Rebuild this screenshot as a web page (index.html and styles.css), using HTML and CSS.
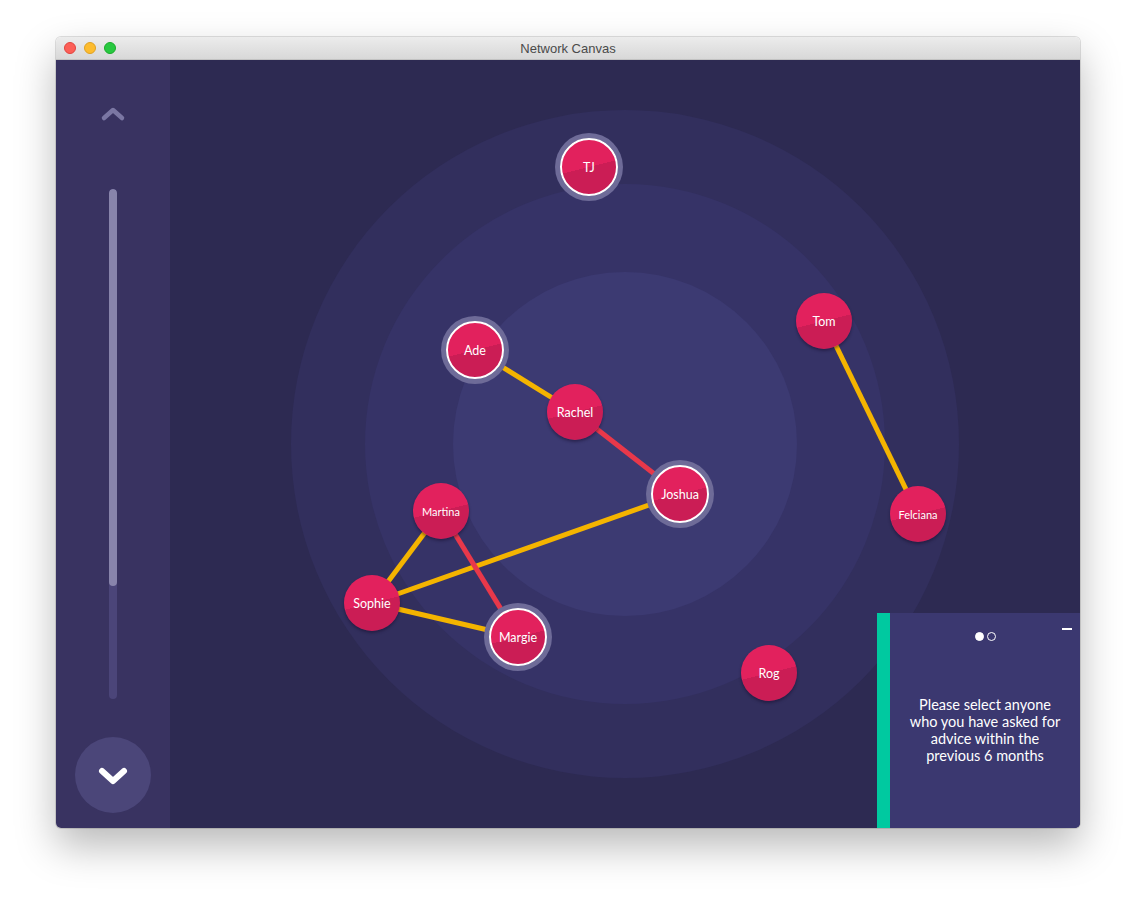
FILE: index.html
```html
<!DOCTYPE html>
<html>
<head>
<meta charset="utf-8">
<title>Network Canvas</title>
<link rel="stylesheet" href="styles.css">
</head>
<body>
<div class="window">
  <div class="titlebar">
    <div class="lights">
      <span class="light red"></span>
      <span class="light yellow"></span>
      <span class="light green"></span>
    </div>
    <div class="title">Network Canvas</div>
  </div>
  <div class="content">
    <aside class="sidebar">
      <button class="up-btn" aria-label="Previous">
        <svg width="26" height="16" viewBox="0 0 26 16"><path d="M4 12 L13 4 L22 12" fill="none" stroke="#7b77a3" stroke-width="4.5" stroke-linecap="round" stroke-linejoin="round"/></svg>
      </button>
      <div class="progress"><div class="progress-fill"></div></div>
      <button class="down-btn" aria-label="Next">
        <svg width="32" height="22" viewBox="0 0 32 22"><path d="M5 6 L16 16 L27 6" fill="none" stroke="#ffffff" stroke-width="6" stroke-linecap="round" stroke-linejoin="round"/></svg>
      </button>
    </aside>
    <main class="canvas">
      <div class="ring ring-outer"></div>
      <div class="ring ring-middle"></div>
      <div class="ring ring-inner"></div>
      <svg class="edges" width="910" height="768" viewBox="0 0 910 768">
        <g stroke-width="5" stroke-linecap="butt">
          <line x1="305" y1="290" x2="405" y2="352" stroke="#f4b400"/>
          <line x1="405" y1="352" x2="510" y2="434" stroke="#e8384a"/>
          <line x1="510" y1="434" x2="202" y2="543" stroke="#f4b400"/>
          <line x1="271" y1="451" x2="202" y2="543" stroke="#f4b400"/>
          <line x1="271" y1="451" x2="348" y2="577" stroke="#e8384a"/>
          <line x1="202" y1="543" x2="348" y2="577" stroke="#f4b400"/>
          <line x1="654" y1="261" x2="748" y2="454" stroke="#f4b400"/>
        </g>
      </svg>
      <div class="node selected" style="left:419px;top:107px"><span>TJ</span></div>
      <div class="node selected" style="left:305px;top:290px"><span>Ade</span></div>
      <div class="node" style="left:405px;top:352px"><span>Rachel</span></div>
      <div class="node selected" style="left:510px;top:434px"><span>Joshua</span></div>
      <div class="node" style="left:654px;top:261px"><span>Tom</span></div>
      <div class="node small-label" style="left:748px;top:454px"><span>Felciana</span></div>
      <div class="node small-label" style="left:271px;top:451px"><span>Martina</span></div>
      <div class="node" style="left:202px;top:543px"><span>Sophie</span></div>
      <div class="node selected" style="left:348px;top:577px"><span>Margie</span></div>
      <div class="node" style="left:599px;top:613px"><span>Rog</span></div>

      <section class="prompt">
        <div class="prompt-bar"></div>
        <div class="prompt-body">
          <div class="prompt-top">
            <div class="pager">
              <span class="dot filled"></span>
              <span class="dot"></span>
            </div>
            <span class="minimize"></span>
          </div>
          <p class="prompt-text">Please select anyone who you have asked for advice within the previous 6 months</p>
        </div>
      </section>
    </main>
  </div>
</div>
</body>
</html>
```

FILE: styles.css
```css
* { box-sizing: border-box; }
html, body { margin: 0; padding: 0; background: #ffffff; }
body {
  width: 1136px;
  height: 902px;
  padding: 37px 0 0 56px;
  font-family: "Lato", "Noto Sans", sans-serif;
}
.window {
  width: 1024px;
  height: 791px;
  border-radius: 5px;
  overflow: hidden;
  display: flex;
  flex-direction: column;
  box-shadow: 0 18px 40px rgba(0,0,0,0.28), 0 0 0 1px rgba(0,0,0,0.12);
}
.titlebar {
  height: 23px;
  flex: 0 0 23px;
  background: linear-gradient(#ececec, #d8d8d8);
  border-bottom: 1px solid #c2c2c2;
  position: relative;
  display: flex;
  align-items: center;
}
.lights {
  display: flex;
  gap: 8px;
  padding-left: 8px;
  position: relative;
  z-index: 1;
}
.light {
  width: 12px;
  height: 12px;
  border-radius: 50%;
  display: block;
}
.light.red { background: #fc5f57; border: 1px solid #e0443e; }
.light.yellow { background: #fdbc2e; border: 1px solid #dea123; }
.light.green { background: #28c840; border: 1px solid #1aab29; }
.title {
  position: absolute;
  left: 0; right: 0; top: 0; bottom: 0;
  display: flex;
  align-items: center;
  justify-content: center;
  font-family: "Liberation Sans", sans-serif;
  font-size: 13px;
  color: #4a4a4a;
}
.content {
  flex: 1;
  display: flex;
  min-height: 0;
}
.sidebar {
  width: 114px;
  flex: 0 0 114px;
  background: #393361;
  display: flex;
  flex-direction: column;
  align-items: center;
  padding-top: 46px;
}
.up-btn {
  border: 0;
  background: none;
  padding: 0;
  width: 26px;
  height: 16px;
  display: block;
}
.progress {
  margin-top: 67px;
  width: 8px;
  height: 510px;
  border-radius: 4px;
  background: #4b4579;
  position: relative;
  overflow: hidden;
}
.progress-fill {
  width: 8px;
  height: 397px;
  border-radius: 4px;
  background: #8884ab;
}
.down-btn {
  margin-top: 38px;
  width: 76px;
  height: 76px;
  border-radius: 50%;
  border: 0;
  background: #4b4679;
  display: flex;
  align-items: center;
  justify-content: center;
  padding: 0;
}
.down-btn svg { margin-top: 1px; }
.canvas {
  flex: 1;
  position: relative;
  background: #2d2a52;
  overflow: hidden;
}
.ring {
  position: absolute;
  border-radius: 50%;
  transform: translate(-50%, -50%);
  left: 455px;
  top: 384px;
}
.ring-outer { width: 668px; height: 668px; background: #322f5d; }
.ring-middle { width: 520px; height: 520px; background: #363367; }
.ring-inner { width: 344px; height: 344px; background: #3c3a72; }
.edges {
  position: absolute;
  left: 0;
  top: 0;
}
.node {
  position: absolute;
  width: 56px;
  height: 56px;
  margin: -28px 0 0 -28px;
  border-radius: 50%;
  background: linear-gradient(166deg, #e2215d 0%, #e2215d 50%, #cb1d55 50%, #cb1d55 100%);
  box-shadow: 0 2px 3px rgba(20, 10, 40, 0.45);
  display: flex;
  align-items: center;
  justify-content: center;
  color: #ffffff;
  font-size: 12.5px;
  font-weight: 400;
}
.node.small-label { font-size: 11px; }
.node.selected {
  border: 2px solid #ffffff;
  box-shadow: 0 0 0 5px #6e6b98;
  width: 58px;
  height: 58px;
  margin: -29px 0 0 -29px;
}
.prompt {
  position: absolute;
  right: 0;
  bottom: 0;
  width: 203px;
  height: 215px;
  display: flex;
  background: #3b3870;
}
.prompt-bar {
  width: 13px;
  flex: 0 0 13px;
  background: #00c9a0;
}
.prompt-body {
  flex: 1;
  display: flex;
  flex-direction: column;
  align-items: center;
  position: relative;
}
.prompt-top {
  height: 48px;
  width: 100%;
  display: flex;
  justify-content: center;
  padding-top: 19px;
}
.pager {
  display: flex;
  gap: 3px;
  height: 10px;
}
.dot {
  width: 9px;
  height: 9px;
  border-radius: 50%;
  border: 1.5px solid #ffffff;
  display: block;
}
.dot.filled { background: #ffffff; }
.minimize {
  position: absolute;
  right: 8px;
  top: 15px;
  width: 10px;
  height: 1.5px;
  background: #ffffff;
}
.prompt-text {
  margin: 35px 0 0;
  width: 158px;
  text-align: center;
  color: #ffffff;
  font-size: 14.5px;
  line-height: 17px;
}
```
